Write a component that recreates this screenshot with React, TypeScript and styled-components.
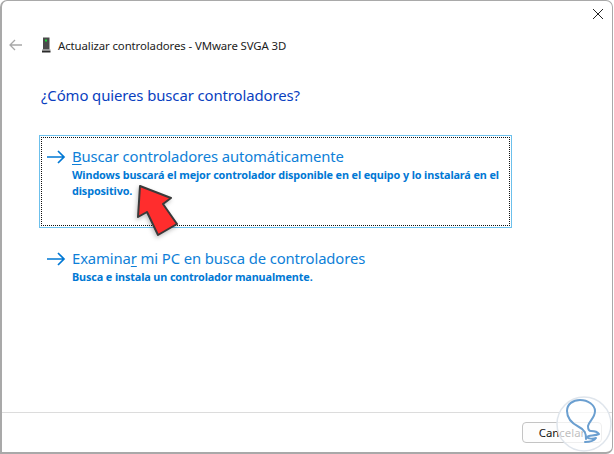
import React from "react";
import styled, { createGlobalStyle } from "styled-components";

const Global = createGlobalStyle`
  html, body { margin: 0; padding: 0; background: #fff; }
  body { width: 614px; height: 454px; overflow: hidden; font-family: "Noto Sans", "Open Sans", sans-serif; }
  svg { display: block; }
`;
const Dialog = styled.div`
  position: relative; box-sizing: border-box; width: 613px; height: 454px;
  display: flex; flex-direction: column; background: #fff;
  border: 1px solid #a9a9a9; border-left-width: 2px; border-bottom-width: 2px; border-top-left-radius: 7px; border-top-right-radius: 7px; border-bottom-right-radius: 7px;
`;
const CloseRow = styled.div`
  display: flex; justify-content: flex-end; height: 28px; padding: 0 8px 0 0;
`;
const CloseBtn = styled.div` width: 12px; height: 12px; margin-top: 7px; `;
const Nav = styled.div`
  display: flex; align-items: center; height: 30px; margin-top: 1px; padding-left: 7px; color: #1a1a1a;
`;
const Back = styled.div` width: 16px; height: 14px; display: flex; align-items: center; margin-right: 16px; `;
const Chip = styled.div` width: 10px; height: 16px; margin-right: 7px; display: flex; `;
const Title = styled.div` font-size: 11.4px; letter-spacing: -0.1px; color: #1c1c1c; white-space: nowrap; `;
const Body = styled.div` flex: 1; padding: 0 0 0 37px; display: flex; flex-direction: column; `;
const Heading = styled.div`
  margin: 24px 0 0 2px; font-size: 14.9px; line-height: 22px; color: #0a3fc0; letter-spacing: -0.1px; white-space: nowrap;
`;
const Option = styled.div<{ $focused?: boolean }>`
  box-sizing: border-box; width: 473px; height: ${p => (p.$focused ? 93 : 60)}px;
  margin-top: ${p => (p.$focused ? 29 : 9)}px; padding: 1px;
  border: 1px solid ${p => (p.$focused ? "#6cc0ec" : "transparent")};
`;
const Inner = styled.div<{ $focused?: boolean }>`
  box-sizing: border-box; height: 100%; display: grid; grid-template-columns: 27px 1fr; padding: 8px 4px 0 3px;
  border: 1px dotted ${p => (p.$focused ? "#111" : "transparent")};
`;
const ArrowCell = styled.div` padding: 4px 0 0 1px; display: flex; height: 14px; `;
const LinkTitle = styled.div`
  font-size: 14.85px; line-height: 21px; color: #0e7fd8; letter-spacing: -0.12px; white-space: nowrap;
  u { text-underline-offset: 2px; text-decoration-thickness: 1px; }
`;
const LinkText = styled.div`
  font-size: 10.83px; line-height: 16px; font-weight: 700; color: #0078d4; letter-spacing: -0.12px; margin-top: -0.5px; width: 440px;
`;
const Footer = styled.div`
  display: flex; justify-content: flex-end; height: 40px; box-sizing: border-box;
  border-top: 1px solid #dcdcdc; padding: 9px 10px 0 0;
`;
const Button = styled.div`
  box-sizing: border-box; width: 80px; height: 21px; border: 1px solid #c4c4c4; border-radius: 4px; background: #fdfdfd;
  font-size: 11.4px; color: #111; display: flex; align-items: center; justify-content: center;
`;
const Pointer = styled.svg`
  position: absolute; left: 134px; top: 183px; filter: drop-shadow(-1px 2px 2px rgba(0, 0, 0, 0.25));
`;
const Watermark = styled.svg` position: absolute; left: 553px; top: 394px; `;

const Arrow = () => (
  <svg width="20" height="14" viewBox="0 0 20 14" fill="none" stroke="#0078d4" strokeWidth="1.7">
    <path d="M1 7H18M12 1l6 6-6 6" />
  </svg>
);

export default function App() {
  return (
    <>
      <Global />
      <Dialog>
        <CloseRow>
          <CloseBtn>
            <svg width="12" height="12" viewBox="0 0 12 12" stroke="#222" strokeWidth="1" fill="none"><path d="M1 1l10 10M11 1L1 11" /></svg>
          </CloseBtn>
        </CloseRow>
        <Nav>
          <Back>
            <svg width="13" height="12" viewBox="0 0 13 12" stroke="#a8a8a8" strokeWidth="1.3" fill="none"><path d="M13 6H1M6 1L1 6l5 5" /></svg>
          </Back>
          <Chip>
            <svg width="10" height="16" viewBox="0 0 10 16">
              <rect x="2" y="0.5" width="6.5" height="12" fill="#4a4a4a" />
              <rect x="1" y="12.5" width="8.5" height="1.5" fill="#8a8a8a" />
              <rect x="1" y="14" width="8.5" height="1.5" fill="#2a2a2a" />
              <rect x="4" y="2.5" width="2" height="2" fill="#18d838" />
            </svg>
          </Chip>
          <Title>Actualizar controladores - VMware SVGA 3D</Title>
        </Nav>
        <Body>
          <Heading>¿Cómo quieres buscar controladores?</Heading>
          <Option $focused>
            <Inner $focused>
              <ArrowCell><Arrow /></ArrowCell>
              <div>
                <LinkTitle><u>B</u>uscar controladores automáticamente</LinkTitle>
                <LinkText>Windows buscará el mejor controlador disponible en el equipo y lo instalará en el dispositivo.</LinkText>
              </div>
            </Inner>
          </Option>
          <Option>
            <Inner>
              <ArrowCell><Arrow /></ArrowCell>
              <div>
                <LinkTitle>Examina<u>r</u> mi PC en busca de controladores</LinkTitle>
                <LinkText>Busca e instala un controlador manualmente.</LinkText>
              </div>
            </Inner>
          </Option>
        </Body>
        <Footer><Button>Cancelar</Button></Footer>
        <Pointer width="46" height="56" viewBox="0 0 46 56">
          <path d="M4 2L35 14L27 20L41 40L22 51L11 28L2 33Z" fill="#ff2d2d" stroke="#3a3a3a" strokeWidth="2" strokeLinejoin="round" />
        </Pointer>
        <Watermark width="58" height="58" viewBox="0 0 58 58" fill="none">
          <circle cx="29" cy="29" r="27" fill="#fff" fillOpacity="0.72" stroke="#dfe5ec" strokeWidth="1.5" />
          <path d="M31 44C31 38 30 35 24 32C16 28 12 23 12 16C12 9 18 5 25 5C33 5 40 10 40 16C40 23 34 26 33 31C33 34 34 36 36 36C39 36 42 36 44 39C40 41 33 40 32 42C33 44 38 44 41 43C39 46 34 47 30 47" stroke="#6b9fd0" strokeWidth="2" strokeLinecap="round" strokeLinejoin="round" />
        </Watermark>
      </Dialog>
    </>
  );
}
